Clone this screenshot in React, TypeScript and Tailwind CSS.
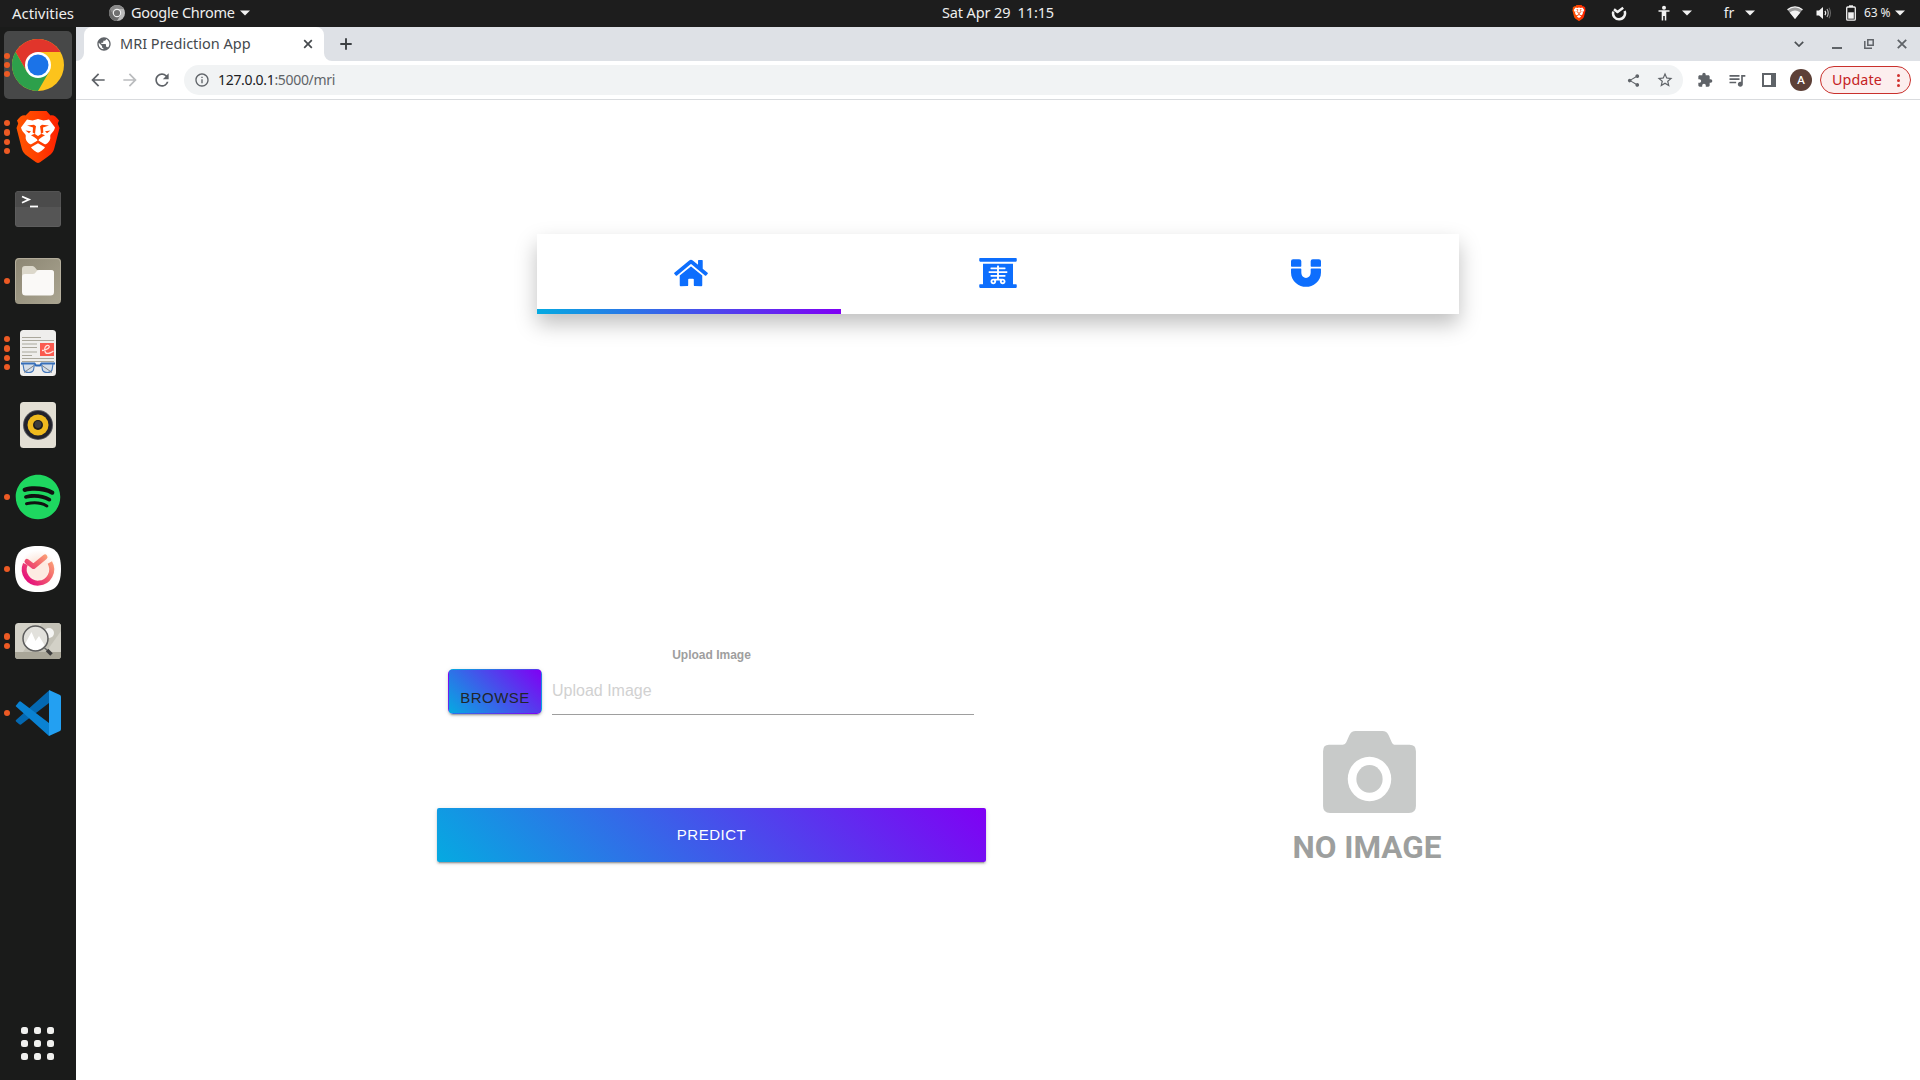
import React from "react";
import { FaHome, FaXRay, FaMagnet, FaSpotify } from "react-icons/fa";
import {
  MdArrowBack,
  MdArrowForward,
  MdRefresh,
  MdShare,
  MdStarOutline,
  MdExtension,
  MdQueueMusic,
  MdInfoOutline,
  MdPublic,
} from "react-icons/md";

function Caret({ className = "" }: { className?: string }) {
  return (
    <svg viewBox="0 0 10 6" className={"h-[6px] w-[10px] shrink-0 " + className}>
      <path d="M0 0.5h10L5 5.5z" fill="#f2f2f2" />
    </svg>
  );
}

function BraveIcon({ className, id }: { className: string; id: string }) {
  return (
    <svg viewBox="0 0 44 52" className={className}>
      <defs>
        <linearGradient id={id} x1="0" x2="1" y1="0" y2="0">
          <stop offset="0" stopColor="#ff5601" />
          <stop offset="0.5" stopColor="#ff4000" />
          <stop offset="1" stopColor="#ff1f01" />
        </linearGradient>
      </defs>
      <path
        d="M14 0H30.500L34.500 4.500C37.500 3.700 40 5.500 43 9.500L41.800 12.500L43.500 17L38.500 36.500C37.500 41 35.500 43 32 45.500L24 51.200C22.500 52.200 21.500 52.200 20 51.200L12 45.500C8.500 43 6.500 41 5.500 36.500L0.500 17L2.200 12.500L1 9.500C4 5.500 6.500 3.700 9.500 4.500Z"
        fill={`url(#${id})`}
      />
      <path
        d="M11 8.500L16.500 9.500L22 8L27.500 9.500L33 8.500L39 16.500C38.500 19 37 21 34.800 23.200C33.800 24.500 34.500 26 34.300 27.500C34 30 32 32 29.800 33.300C28.500 33.800 24 30 22 29.500C20 30 15.500 33.800 14.200 33.300C12 32 10 30 9.700 27.500C9.500 26 10.200 24.500 9.200 23.200C7 21 5.500 19 5 16.500Z"
        fill="#fff"
      />
      <path
        d="M11 14.600L18 13.800L20 15.200L19.300 22.500L15 24.300L18 26L21 28.300L22 31L23 28.300L26 26L29 24.300L24.700 22.500L24 15.200L26 13.800L33 14.600L27 16.500L27.300 21.500L22 25L16.700 21.500L17 16.500Z"
        fill="#ff4500"
      />
      <path d="M20 15.500H24L24.600 22L22 24.500L19.400 22Z" fill="#fff" />
      <path d="M9.500 19.500L15 20.300L13 22.300ZM34.500 19.500L29 20.300L31 22.300Z" fill="#ff4500" />
      <path d="M22 32.200L29 36.200C28.500 37.500 23.500 41.500 22 41.500S15.500 37.500 15 36.200Z" fill="#fff" />
    </svg>
  );
}

function ChromeIcon() {
  return (
    <svg viewBox="-26 -26 52 52" className="h-[52px] w-[52px]">
      <circle r="26" fill="#fcc31c" />
      <path d="M-22.500 -13A26 26 0 0 1 22.500 -13H0L-11.250 6.500Z" fill="#e1352b" />
      <path d="M-22.500 -13A26 26 0 0 0 0 26L11.250 6.500H-11.250Z" fill="#2da04b" />
      <circle r="13" fill="#fff" />
      <circle r="10.500" fill="#1b73e8" />
    </svg>
  );
}

function MonoChromeIcon() {
  return (
    <svg viewBox="-8 -8 16 16" className="h-4 w-4">
      <circle r="8" fill="#b9b9b9" />
      <path d="M-6.900 -4A8 8 0 0 1 6.900 -4H0L-3.500 2Z" fill="#8a8a8a" />
      <path d="M-6.900 -4A8 8 0 0 0 0 8L3.500 2H-3.500Z" fill="#6b6b6b" />
      <circle r="4.200" fill="#f0f0f0" />
      <circle r="3.100" fill="#707070" />
    </svg>
  );
}

function TerminalIcon() {
  return (
    <svg viewBox="0 0 46 36" className="h-9 w-[46px]">
      <rect width="46" height="36" rx="3.500" fill="#676767" />
      <rect x="0.500" y="0.500" width="45" height="35" rx="3" fill="#555" />
      <path d="M3.500 0.500H42.500A3 3 0 0 1 45.500 3.500V16H0.500V3.500A3 3 0 0 1 3.500 0.500Z" fill="#4b4b4b" />
      <path d="M7 5.500L14 8.600L7 11.800" stroke="#fff" strokeWidth="1.800" fill="none" />
      <path d="M15 15.500H23" stroke="#fff" strokeWidth="1.800" />
    </svg>
  );
}

function FilesIcon() {
  return (
    <svg viewBox="0 0 46 46" className="h-[46px] w-[46px]">
      <defs>
        <linearGradient id="files-bg" x1="0" x2="1" y1="0" y2="1">
          <stop offset="0" stopColor="#8c8673" />
          <stop offset="1" stopColor="#aaa591" />
        </linearGradient>
      </defs>
      <rect width="46" height="46" rx="4" fill="url(#files-bg)" />
      <path d="M0.500 42V4A3.500 3.500 0 0 1 4 0.600H42A3.500 3.500 0 0 1 45.500 4V42" stroke="#b5af9d" fill="none" />
      <path d="M7 11A3 3 0 0 1 10 8H17.500Q19 8 20 9.500L22 12H36A3 3 0 0 1 39 15V30H7Z" fill="#dcd8cb" />
      <path d="M7 19Q7 16 10 16H18Q20 16 21 14Q22 12 24 12H36A3 3 0 0 1 39 15V34A3.500 3.500 0 0 1 35.500 37.500H10.500A3.500 3.500 0 0 1 7 34Z" fill="#faf9f7" />
    </svg>
  );
}

function DocumentIcon() {
  return (
    <svg viewBox="0 0 36 46" className="h-[46px] w-9">
      <rect width="36" height="46" rx="3.500" fill="#efeeec" />
      <path d="M2 7.500H21M2 10.500H34M2 14H17M2 17.500H17M2 22H17M2 25.500H12M2 28.500H34M2 31.500H34" stroke="#aaa79b" strokeWidth="1.200" />
      <rect x="20" y="13" width="14" height="13" fill="#fb5b50" />
      <path d="M22 20.500C27 20.500 31 17 28.500 15.500C26 14.500 23 19 25.500 22.500C27 24.500 31 23 33.500 21" stroke="#ffe3df" strokeWidth="1.300" fill="none" />
      <path d="M1 33.500H14.500L16 35.500H20L21.500 33.500H35" stroke="#2d68b8" strokeWidth="1.800" fill="none" />
      <path d="M3 34H14.500L13.500 40Q12.500 42.500 8.500 42.500Q5 42.500 4 40ZM33 34H21.500L22.500 40Q23.500 42.500 27.500 42.500Q31 42.500 32 40Z" fill="#d5dee8" stroke="#4377bb" strokeWidth="1.100" />
      <path d="M4 42.500L14 35.500M32 42.500L22 35.500" stroke="#7d8289" strokeWidth="1" />
    </svg>
  );
}

function SpeakerBoxIcon() {
  return (
    <svg viewBox="0 0 36 46" className="h-[46px] w-9">
      <rect width="36" height="46" rx="3.500" fill="#e3dfd4" />
      <circle cx="18" cy="23" r="15" fill="#55565c" />
      <circle cx="18" cy="23" r="14" fill="#22222b" />
      <circle cx="18" cy="23" r="10.500" fill="#efba1e" />
      <circle cx="18" cy="23" r="5" fill="#1d1d1d" />
      <circle cx="18" cy="22.500" r="3.400" fill="#3d3d3d" />
    </svg>
  );
}

function ClockAppIcon() {
  return (
    <svg viewBox="0 0 46 46" className="h-[46px] w-[46px]">
      <defs>
        <linearGradient id="clock-app" gradientUnits="userSpaceOnUse" x1="36" x2="10" y1="8" y2="32">
          <stop offset="0" stopColor="#fdb27a" />
          <stop offset="0.500" stopColor="#f2606c" />
          <stop offset="1" stopColor="#e5127c" />
        </linearGradient>
        <radialGradient id="clock-glow">
          <stop offset="0.500" stopColor="#fdebe2" />
          <stop offset="1" stopColor="#fff" />
        </radialGradient>
      </defs>
      <path d="M23 0C40 0 46 6 46 23S40 46 23 46S0 40 0 23S6 0 23 0Z" fill="#fff" />
      <circle cx="23" cy="23" r="19" fill="url(#clock-glow)" />
      <path d="M10.400 18A13.700 13.700 0 1 0 34.800 16.500" stroke="url(#clock-app)" strokeWidth="5" fill="none" />
      <path d="M12 15.500L18.500 20.500L30 11" stroke="url(#clock-app)" strokeWidth="5" strokeLinejoin="round" strokeLinecap="round" fill="none" />
    </svg>
  );
}

function ImageViewerIcon() {
  return (
    <svg viewBox="0 0 46 36" className="h-9 w-[46px]">
      <rect width="46" height="36" rx="3.500" fill="#d3d1c7" />
      <path d="M27 0H42.500A3.500 3.500 0 0 1 46 3.500V8L31 29H8Z" fill="#c3c1b6" />
      <circle cx="34" cy="10" r="5" fill="#f5f5f3" />
      <path d="M0 29H46V32.500A3.500 3.500 0 0 1 42.500 36H3.500A3.500 3.500 0 0 1 0 32.500Z" fill="#a9a698" />
      <circle cx="20.500" cy="15.500" r="12" fill="#e2e1dc" />
      <path d="M10 21L16.500 9L20.500 18L24 13L29.500 22Q26 27 20.500 27.500Q14 27 10 21Z" fill="#fff" />
      <circle cx="20.500" cy="15.500" r="12.500" fill="none" stroke="#5c5c5c" strokeWidth="1.500" />
      <path d="M29 24.500L32 27" stroke="#666" strokeWidth="1.500" />
      <path d="M32 27L36.500 31.500" stroke="#3e3e3e" strokeWidth="3.600" />
    </svg>
  );
}

function CodeIcon() {
  return (
    <svg viewBox="0 0 46 46" className="h-[46px] w-[46px]">
      <path d="M1 30L34 0.500V13L6 34.500Q5 35 4 34L1 31.500Q0.300 30.800 1 30Z" fill="#0468b1" />
      <path d="M1 15.500L4 11.800Q5 11 6 11.700L34 33V46L1 16.500Q0.300 16 1 15.500Z" fill="#0a82d2" />
      <path d="M34 0L45 5Q46 5.500 46 7V39Q46 40.300 45 41L34 46Z" fill="#23a0f2" />
    </svg>
  );
}

const dockItems: { key: string; dots: number; icon: React.ReactNode; active?: boolean }[] = [
  { key: "chrome", dots: 3, icon: <ChromeIcon />, active: true },
  { key: "brave", dots: 4, icon: <BraveIcon id="brave-dock" className="h-[52px] w-11" /> },
  { key: "terminal", dots: 0, icon: <TerminalIcon /> },
  { key: "files", dots: 1, icon: <FilesIcon /> },
  { key: "documents", dots: 4, icon: <DocumentIcon /> },
  { key: "music", dots: 0, icon: <SpeakerBoxIcon /> },
  {
    key: "spotify",
    dots: 1,
    icon: (
      <span className="flex size-[46px] items-center justify-center rounded-full bg-[radial-gradient(circle,#111_60%,transparent_62%)]">
        <FaSpotify className="size-[46px] shrink-0 text-[#1ed760]" />
      </span>
    ),
  },
  { key: "timer", dots: 1, icon: <ClockAppIcon /> },
  { key: "viewer", dots: 2, icon: <ImageViewerIcon /> },
  { key: "code", dots: 1, icon: <CodeIcon /> },
];

function Dock() {
  return (
    <aside className="flex w-[76px] shrink-0 flex-col bg-[#1a1b1a] pt-[2px]">
      {dockItems.map((item) => (
        <div key={item.key} className="flex h-[72px] items-center pl-1">
          <div
            className={
              item.active
                ? "relative flex size-[68px] items-center justify-center rounded-[5px] bg-[#474848]"
                : "relative flex size-[68px] items-center justify-center"
            }
          >
            <div className="absolute top-0 left-0 flex h-full flex-col items-center justify-center gap-[3px]">
              {Array.from({ length: item.dots }, (_, i) => (
                <span key={i} className="size-[6.300px] rounded-full bg-[#ec5a24]" />
              ))}
            </div>
            {item.icon}
          </div>
        </div>
      ))}
      <div className="mt-auto mb-[20px] ml-[21px] grid w-[33px] grid-cols-3 gap-[6px]">
        {Array.from({ length: 9 }, (_, i) => (
          <span key={i} className="size-[7px] rounded-[2.500px] bg-[#f0f0ee]" />
        ))}
      </div>
    </aside>
  );
}

function SystemBar() {
  return (
    <header className="grid h-[27px] grid-cols-[942px_1fr_auto] items-center bg-[#1d1d1d] text-[15px] whitespace-pre text-[#eeeeee]">
      <div className="flex h-[26px] items-center self-start pl-3">
        <span className="w-[97px] tracking-[-0.050px]">Activities</span>
        <MonoChromeIcon />
        <span className="ml-[6px] w-[109px] text-[14.500px] tracking-[-0.250px]">Google Chrome</span>
        <Caret />
      </div>
      <span className="self-start text-[14.500px] leading-[25px] tracking-[-0.130px]">{"Sat Apr 29  11:15"}</span>
      <div className="flex h-[26px] items-center self-start pr-[15px]">
        <BraveIcon id="brave-tray" className="h-4 w-[14px]" />
        <svg viewBox="0 0 16 16" className="ml-[25px] h-4 w-4">
          <path d="M2.300 6.500A6 6 0 1 0 13.600 6" stroke="#f2f2f2" strokeWidth="2.500" fill="none" />
          <path d="M3 4.200L6.500 7L12.200 2.800" stroke="#f2f2f2" strokeWidth="2.500" strokeLinejoin="round" fill="none" />
        </svg>
        <svg viewBox="0 0 12 16" className="ml-[31px] h-4 w-3" fill="#f2f2f2">
          <circle cx="6" cy="2.700" r="2" />
          <path d="M0.500 5.200H11.500V6.800H8.300V15.500H6.800V11H5.200V15.500H3.700V6.800H0.500Z" />
        </svg>
        <Caret className="ml-3" />
        <span className="ml-[30px] w-[14px] text-center text-sm">fr</span>
        <Caret className="ml-[9px]" />
        <svg viewBox="0 0 16 14" className="ml-8 h-[14px] w-4">
          <path d="M0.500 3.800C5 0 11 0 15.500 3.800L8 13Z" fill="#9b9b9b" />
          <path d="M0.500 3.800C5 0 11 0 15.500 3.800" stroke="#f2f2f2" strokeWidth="1.200" fill="none" />
          <path d="M2.700 6.500C6 3.800 10 3.800 13.300 6.500L8 13Z" fill="#f2f2f2" />
        </svg>
        <svg viewBox="0 0 16 14" className="ml-[13px] h-[14px] w-4">
          <path d="M0.500 4.500H3L7 1V13L3 9.500H0.500Z" fill="#f2f2f2" />
          <path d="M9 4.800Q10.500 7 9 9.200" stroke="#f2f2f2" strokeWidth="1.300" fill="none" />
          <path d="M11 3Q13.500 7 11 11" stroke="#b5b5b5" strokeWidth="1.200" fill="none" />
          <path d="M13 1.800Q16 7 13 12.200" stroke="#666" strokeWidth="1.100" fill="none" />
        </svg>
        <svg viewBox="0 0 10 16" className="ml-[14px] h-4 w-[10px]">
          <path d="M3 0.300H7V2H3Z" fill="#f2f2f2" />
          <rect x="0.700" y="2" width="8.600" height="13.200" rx="1" fill="none" stroke="#f2f2f2" strokeWidth="1.300" />
          <path d="M2.200 7.300H7.800V13.700H2.200Z" fill="#f2f2f2" />
        </svg>
        <span className="ml-2 w-[26px] text-[12px] tracking-[-0.100px]">63 %</span>
        <Caret className="ml-[5px]" />
      </div>
    </header>
  );
}

function TabStrip() {
  return (
    <div className="flex h-[34px] items-center bg-[#dee1e6]">
      <svg viewBox="0 0 8 8" className="size-2 self-end">
        <path d="M8 0V8H0A8 8 0 0 0 8 0Z" fill="#fff" />
      </svg>
      <div className="flex h-full w-60 items-center rounded-t-lg bg-white pl-3">
        <MdPublic className="size-4 text-[#5f6368]" />
        <span className="ml-2 w-[182px] text-[14.500px] tracking-[0px] text-[#45494d]">MRI Prediction App</span>
        <svg viewBox="0 0 10 10" className="ml-[1px] size-[10px]">
          <path d="M1.200 1.200L8.800 8.800M8.800 1.200L1.200 8.800" stroke="#45494d" strokeWidth="1.700" />
        </svg>
      </div>
      <svg viewBox="0 0 8 8" className="size-2 self-end">
        <path d="M0 0V8H8A8 8 0 0 1 0 0Z" fill="#fff" />
      </svg>
      <svg viewBox="0 0 12 12" className="ml-2 size-3">
        <path d="M6 0.300V11.700M0.300 6H11.700" stroke="#3c4043" strokeWidth="1.900" />
      </svg>
      <div className="ml-auto flex items-center pr-[13px]">
        <svg viewBox="0 0 10 6" className="h-[6px] w-[10px]">
          <path d="M0.800 0.800L5 5L9.200 0.800" stroke="#4c5054" strokeWidth="1.700" fill="none" />
        </svg>
        <span className="mt-[7px] ml-7 h-[2px] w-[10px] bg-[#5f6368]" />
        <svg viewBox="0 0 10 10" className="ml-[22px] size-[10px]">
          <path d="M3.800 0.800H9.200V6.200H3.800ZM0.800 2V9.200H8" stroke="#5f6368" strokeWidth="1.500" fill="none" />
        </svg>
        <svg viewBox="0 0 10 10" className="ml-[23px] size-[10px]">
          <path d="M0.800 0.800L9.200 9.200M9.200 0.800L0.800 9.200" stroke="#5f6368" strokeWidth="1.800" />
        </svg>
      </div>
    </div>
  );
}

function Toolbar() {
  return (
    <div className="flex h-[39px] items-center border-b border-[#d9dbde] bg-white pl-3 text-[#5f6368]">
      <MdArrowBack className="size-5" />
      <MdArrowForward className="ml-3 size-5 text-[#babcbe]" />
      <MdRefresh className="ml-3 size-5" />
      <div className="ml-3 flex h-[30px] w-[1499px] items-center rounded-full bg-[#f1f3f4] pl-[10px]">
        <MdInfoOutline className="size-4" />
        <span className="ml-2 pb-px text-[14px] tracking-[-0.320px]">
          <span className="text-[#202124]">127.0.0.1</span>
          <span>:5000/mri</span>
        </span>
        <MdShare className="ml-auto size-[15px]" />
        <MdStarOutline className="mr-[9px] ml-[15px] size-[18px]" />
      </div>
      <MdExtension className="ml-[14px] size-4" />
      <MdQueueMusic className="ml-[14px] size-5" />
      <svg viewBox="0 0 14 14" className="ml-[15px] size-[14px]">
        <path d="M0 0H14V14H0ZM2 2V12H9V2Z" fill="#5f6368" fillRule="evenodd" />
      </svg>
      <span className="ml-[14px] flex size-[22px] items-center justify-center rounded-full bg-[#5d4037] text-[11.500px] font-medium text-white">A</span>
      <div className="ml-2 flex h-7 w-[91px] items-center rounded-full border border-[#c9302c] bg-[#fceeee] pl-[11px] text-[#c5221f]">
        <span className="w-[65px] text-[14.300px] tracking-[0.100px]">Update</span>
        <svg viewBox="0 0 3 13" className="h-[13px] w-[3px]" fill="#d0312d">
          <circle cx="1.500" cy="1.500" r="1.500" />
          <circle cx="1.500" cy="6.500" r="1.500" />
          <circle cx="1.500" cy="11.500" r="1.500" />
        </svg>
      </div>
    </div>
  );
}

function NavTabs() {
  return (
    <nav className="relative mx-auto grid h-20 w-[922px] grid-cols-3 bg-white text-[30px] text-[#0d6efd] shadow-[0_10px_20px_rgba(0,0,0,0.25)]">
      <a className="flex items-start justify-center pt-6">
        <FaHome className="h-[30px] w-[34px]" />
      </a>
      <a className="flex items-start justify-center pt-6">
        <FaXRay className="h-[30px] w-[38px]" />
      </a>
      <a className="flex items-start justify-center pt-6 pl-px">
        <FaMagnet className="h-[30px] w-[30px]" />
      </a>
      <span className="absolute bottom-0 left-0 h-[5px] w-[304px] bg-[linear-gradient(90deg,#05aae1,#8000f4)]" />
    </nav>
  );
}

function UploadForm() {
  return (
    <form className="ml-[361px] flex w-[549px] flex-col font-['Liberation_Sans',Arial,sans-serif]">
      <label className="text-center text-[12px] leading-[18px] font-bold text-[#9e9e9e]">Upload Image</label>
      <div className="mt-[5px] ml-[11px] flex h-[46px] w-[527px] items-start gap-[10px]">
        <button
          type="button"
          className="h-[45px] w-[94px] rounded-[5px] border border-transparent bg-[linear-gradient(45deg,#05aae1,#8000f4)] pt-[12px] text-[15px] leading-[22px] tracking-[0.500px] text-[#212529] shadow-[0_2px_2px_0_rgba(0,0,0,0.14),0_3px_1px_-2px_rgba(0,0,0,0.2),0_1px_5px_0_rgba(0,0,0,0.12)]"
        >
          BROWSE
        </button>
        <div className="h-[46px] w-[422px] border-b border-[#9e9e9e] pt-[10px] text-[16px] leading-6 text-[#d1d1d1]">Upload Image</div>
      </div>
      <button
        type="button"
        className="mt-[93px] h-[54px] rounded-[2px] bg-[linear-gradient(45deg,#05aae1,#8000f4)] text-[15px] tracking-[0.500px] text-white shadow-[0_2px_2px_0_rgba(0,0,0,0.14),0_3px_1px_-2px_rgba(0,0,0,0.2),0_1px_5px_0_rgba(0,0,0,0.12)]"
      >
        PREDICT
      </button>
    </form>
  );
}

function NoImage() {
  return (
    <div className="mt-[84px] ml-[303px] flex w-[160px] flex-col items-center">
      <svg viewBox="0 0 94 83" className="mt-px h-[82px] w-[93px]">
        <path
          d="M6 14H20Q22.500 14 23.500 11.500L26.500 4.500Q28.500 0 33 0H60Q64.500 0 66.500 4.500L69.500 11.500Q70.500 14 72 14H87.500Q94 14 94 20.500V76Q94 83 87 83H7Q0 83 0 76V20.500Q0 14 6 14Z"
          fill="#c8cac9"
        />
        <ellipse cx="47" cy="48.500" rx="22" ry="22.500" fill="#fff" />
        <ellipse cx="47" cy="48.500" rx="13.300" ry="14" fill="#c8cac9" />
      </svg>
      <span className="mt-[18px] -ml-1 font-['Roboto',sans-serif] text-[31.500px] leading-[34px] font-bold tracking-[0px] whitespace-nowrap text-[#9d9f9e]">NO IMAGE</span>
    </div>
  );
}

export default function App() {
  return (
    <div className="flex h-[1080px] w-[1920px] flex-col overflow-hidden bg-white font-['Noto_Sans',sans-serif]">
      <SystemBar />
      <div className="flex min-h-0 flex-1">
        <Dock />
        <div className="flex flex-1 flex-col">
          <TabStrip />
          <Toolbar />
          <main className="flex-1 pt-[134px]">
            <NavTabs />
            <section className="flex items-start pt-[332px]">
              <UploadForm />
              <NoImage />
            </section>
          </main>
        </div>
      </div>
    </div>
  );
}
